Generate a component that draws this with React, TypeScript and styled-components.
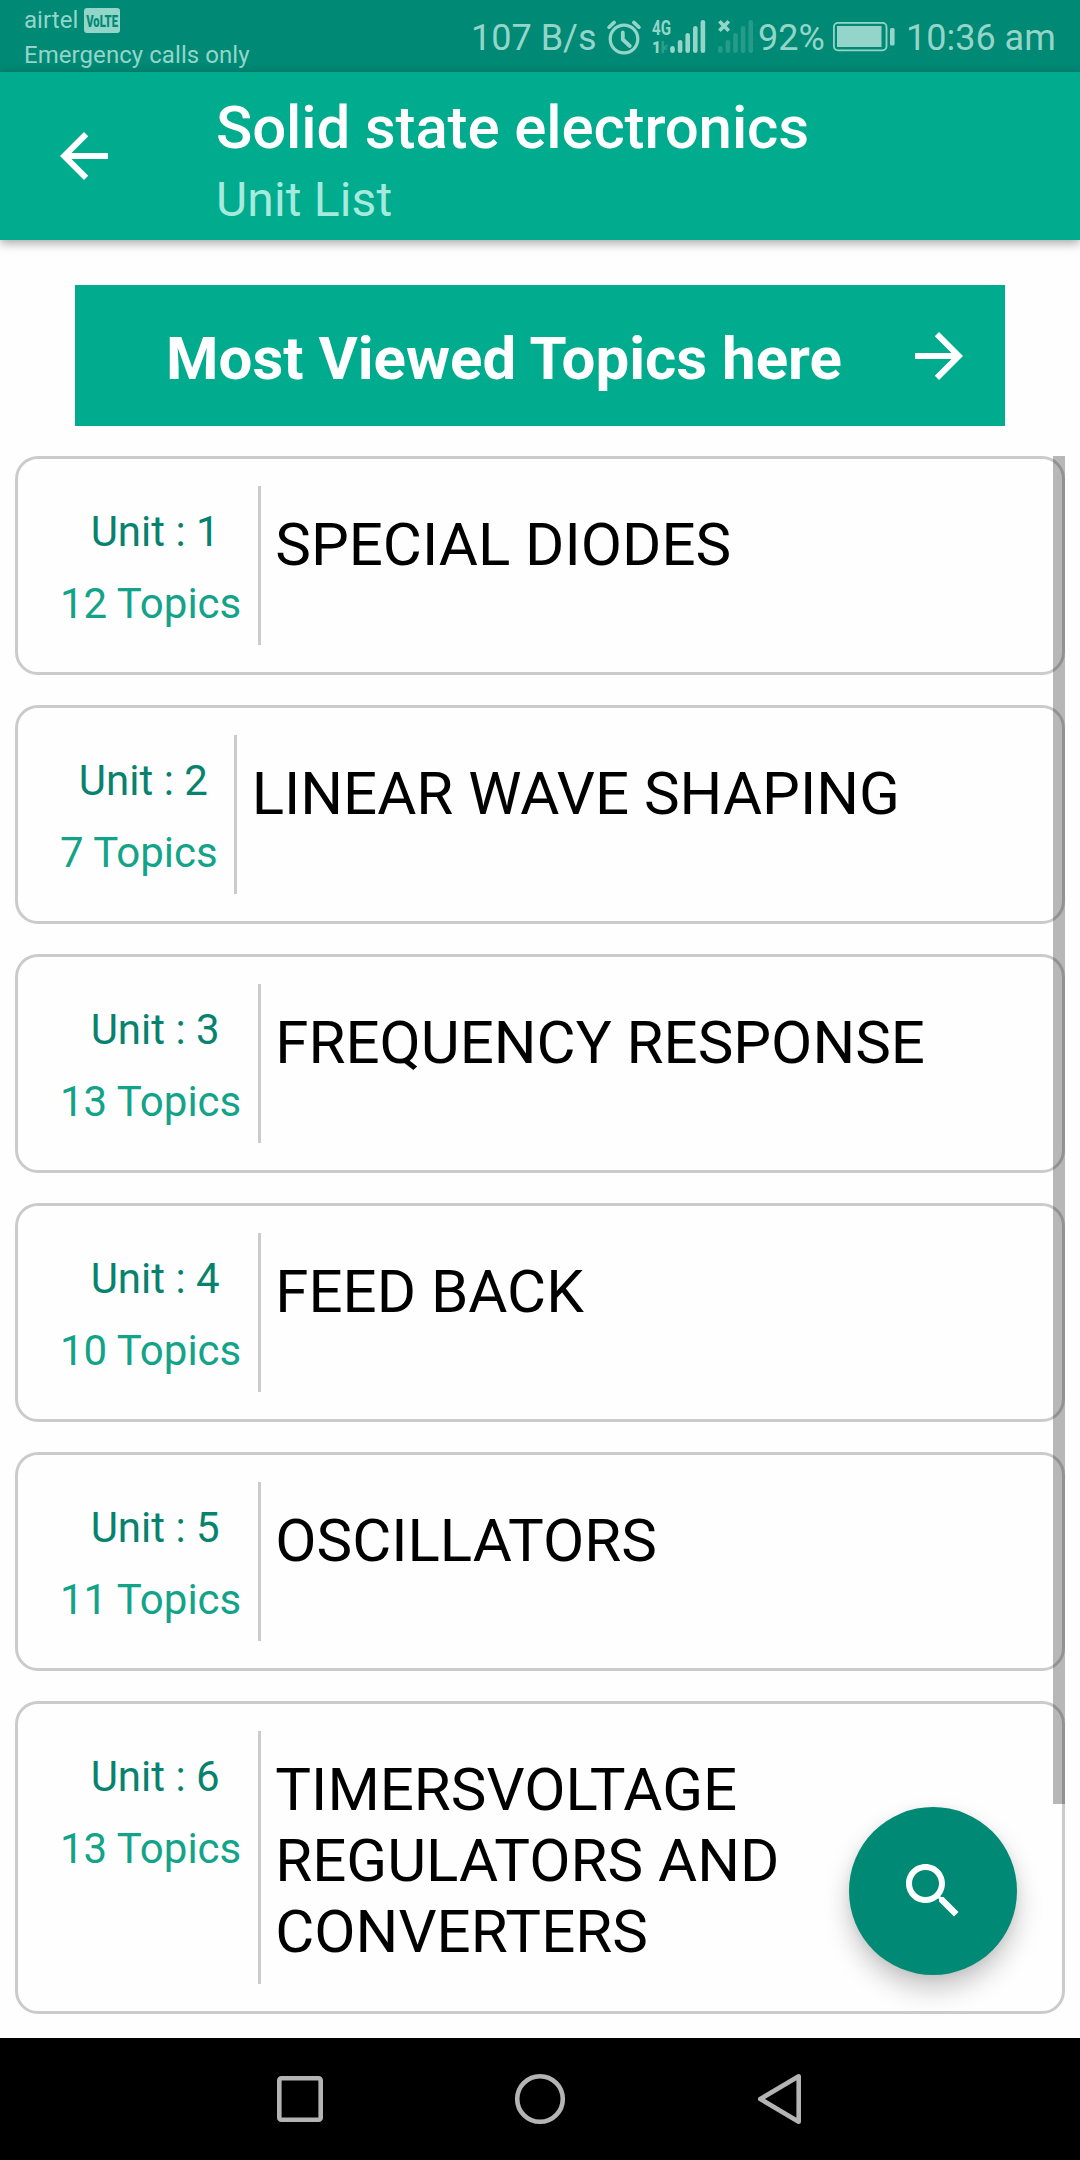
import React from 'react';
import styled, { createGlobalStyle } from 'styled-components';

const colors = {
  primary: '#00ab8e',
  primaryDark: '#008975',
  statusInk: '#94d5c9',
  line: '#cbcbcb',
};

const GlobalStyle = createGlobalStyle`
  * { box-sizing: border-box; }
  body { margin: 0; background: #fefefe; font-family: Roboto, "Noto Sans", sans-serif; }
  svg { display: block; flex: none; overflow: visible; }
`;

const Screen = styled.div`
  width: 1080px;
  height: 2160px;
  display: flex;
  flex-direction: column;
  overflow: hidden;
  background: #fefefe;
`;

const StatusBar = styled.header`
  height: 72px;
  flex: none;
  display: flex;
  justify-content: space-between;
  padding: 0 24px;
  background: ${colors.primaryDark};
  color: ${colors.statusInk};
`;

const Carrier = styled.div`
  display: flex;
  flex-direction: column;
  padding-top: 3px;
  font-size: 24px;
  letter-spacing: 0.06px;
  line-height: 35px;
  white-space: nowrap;
`;

const CarrierRow = styled.div`
  display: flex;
  height: 35px;
  align-items: center;
  gap: 6px;
`;

const VolteBadge = styled.span`
  width: 36px;
  height: 25px;
  display: flex;
  align-items: center;
  justify-content: center;
  border-radius: 3px;
  background: ${colors.statusInk};
  color: ${colors.primaryDark};
  font-size: 17px;
  font-weight: 900;
  line-height: 24px;

  span { flex: none; transform: scaleX(0.66); letter-spacing: 0; }
`;

const StatusIcons = styled.div`
  height: 74px;
  display: flex;
  align-items: center;
  font-size: 36px;
  line-height: 42px;
  white-space: nowrap;
`;

const StatusText = styled.span<{ $width: number }>`
  width: ${(p) => p.$width}px;
  padding-top: 1px;
`;

const Spacer = styled.span<{ $width: number }>`
  width: ${(p) => p.$width}px;
`;

const AppBar = styled.div`
  height: 168px;
  flex: none;
  display: flex;
  background: ${colors.primary};
  box-shadow: 0 3px 10px rgba(0, 0, 0, 0.36);
  color: #fff;
`;

const BackButton = styled.button`
  width: 216px;
  padding: 0 0 0 48px;
  border: 0;
  background: none;
  color: inherit;
`;

const Titles = styled.div`
  display: flex;
  flex-direction: column;
  padding-top: 21px;
`;

const Title = styled.h1`
  margin: 0;
  font-size: 60px;
  font-weight: 500;
  letter-spacing: -0.14px;
  line-height: 70px;
`;

const Subtitle = styled.div`
  margin-top: 9px;
  font-size: 48px;
  letter-spacing: 0.15px;
  line-height: 56px;
  color: #a5eadd;
`;

const Banner = styled.button`
  width: 930px;
  height: 141px;
  flex: none;
  margin: 45px 75px 30px;
  padding: 6px 30px 0 91px;
  display: flex;
  justify-content: space-between;
  align-items: center;
  border: 0;
  background: ${colors.primary};
  color: #fff;
  font: 700 60px/70px Roboto, sans-serif;
  svg { margin-top: -6px; }
`;

const UnitArea = styled.main`
  position: relative;
  flex: 1;
  min-height: 0;
  padding: 0 15px;
`;

const UnitList = styled.div`
  display: flex;
  flex-direction: column;
  gap: 30px;
`;

const Card = styled.article`
  min-height: 219px;
  display: flex;
  padding: 27px 42px;
  border: 3px solid ${colors.line};
  border-radius: 23px;
`;

const Meta = styled.div`
  display: flex;
  flex-direction: column;
  align-items: center;
  padding: 21px 16.5px 0 0;
  border-right: 3px solid ${colors.line};
  font-size: 42px;
  line-height: 50px;
  white-space: nowrap;
`;

const UnitNumber = styled.div`
  padding-left: 9px;
  color: #07826f;
`;

const TopicCount = styled.div`
  margin-top: 22px;
  color: #12a388;
`;

const UnitName = styled.h2`
  flex: 1;
  margin: 0;
  padding: 23px 0 17px 14.5px;
  font-size: 60px;
  font-weight: 400;
  line-height: 71px;
  color: #000;
`;

const ScrollThumb = styled.div`
  position: absolute;
  top: 0;
  right: 15px;
  width: 12px;
  height: 1348px;
  background: rgba(0, 0, 0, 0.28);
`;

const SearchButton = styled.button`
  position: absolute;
  right: 63px;
  bottom: 63px;
  width: 168px;
  height: 168px;
  padding: 0;
  display: flex;
  align-items: center;
  justify-content: center;
  border: 0;
  border-radius: 50%;
  background: ${colors.primaryDark};
  color: #fff;
  box-shadow: 0 14px 26px rgba(0, 0, 0, 0.22), 0 2px 10px rgba(0, 0, 0, 0.06);
`;

const NavBar = styled.nav`
  height: 122px;
  flex: none;
  display: flex;
  justify-content: center;
  align-items: center;
  gap: 180px;
  background: #000;
`;

const MaterialIcon = ({ d }: { d: string }) => (
  <svg width="72" height="72" viewBox="0 0 24 24" fill="currentColor"><path d={d} /></svg>
);

const BACK = 'M20 11H7.83l5.59-5.59L12 4l-8 8 8 8 1.41-1.41L7.83 13H20v-2z';
const FORWARD = 'M12 4l-1.41 1.41L16.17 11H4v2h12.17l-5.58 5.59L12 20l8-8z';
const SEARCH =
  'M15.5 14h-.79l-.28-.27C15.41 12.59 16 11.11 16 9.5 16 5.91 13.09 3 9.5 3S3 5.91 3 9.5 5.91 16 9.5 16c1.61 0 3.09-.59 4.23-1.57l.27.28v.79l5 4.99L20.49 19l-4.99-5zm-6 0C7.01 14 5 11.99 5 9.5S7.01 5 9.5 5 14 7.01 14 9.5 11.99 14 9.5 14z';

const AlarmIcon = () => (
  <svg width="34" height="36" viewBox="0 0 34 36" fill="none" stroke={colors.statusInk} strokeWidth="3.2" strokeLinecap="round">
    <circle cx="17" cy="20" r="13.8" />
    <path d="M15.8 13.5V20.5l7 6.5" strokeWidth="3.8" strokeLinejoin="round" />
    <path d="M2 8.2L7.2 3.4M26.8 3.4L32 8.2" strokeWidth="3.6" />
  </svg>
);

const BARS = [7, 13, 20, 27, 33];

const SignalBars = ({ x, opacity = 1 }: { x: number; opacity?: number }) => (
  <g fill={colors.statusInk} opacity={opacity}>
    {BARS.map((h, i) => (
      <rect key={h} x={x + i * 7.6} y={34 - h} width="4.6" height={h} rx="2.3" />
    ))}
  </g>
);

const PrimarySignal = () => (
  <svg width="54" height="36" viewBox="0 0 54 36" fill={colors.statusInk} fontFamily="Roboto" fontWeight="700">
    <text x="0" y="15.6" fontSize="20" textLength="19" lengthAdjust="spacingAndGlyphs">4G</text>
    <text x="0" y="34" fontSize="16" fontWeight="900" textLength="9" lengthAdjust="spacingAndGlyphs">1</text>
    <path d="M9.5 22h2.6v5l4-2-2 4 1.6 2-3.6-.5V34H9.500z" opacity="0.28" />
    <SignalBars x={18.2} />
  </svg>
);

const EmptySignal = () => (
  <svg width="36" height="36" viewBox="0 0 36 36">
    <SignalBars x={0} opacity={0.25} />
    <path d="M1.4 2.2l9.4 9.6M10.8 2.2L1.4 11.8" stroke={colors.statusInk} strokeWidth="3.6" />
  </svg>
);

const BatteryIcon = () => (
  <svg width="62" height="30" viewBox="0 0 62 30" fill={colors.statusInk}>
    <rect x="0.9" y="0.9" width="52.6" height="27.4" rx="4" fill="none" stroke={colors.statusInk} strokeWidth="1.8" />
    <rect x="4" y="4" width="44.5" height="21" />
    <rect x="57" y="6" width="4.6" height="17.5" rx="1.5" />
  </svg>
);

const NavIcon = ({ children }: { children: React.ReactNode }) => (
  <svg width="60" height="60" viewBox="0 0 60 60" fill="none" stroke="#b4b4b4" strokeWidth="4.6" strokeLinejoin="round">
    {children}
  </svg>
);

const units = [
  { topics: 12, name: 'SPECIAL DIODES' },
  { topics: 7, name: 'LINEAR WAVE SHAPING' },
  { topics: 13, name: 'FREQUENCY RESPONSE' },
  { topics: 10, name: 'FEED BACK' },
  { topics: 11, name: 'OSCILLATORS' },
  { topics: 13, name: 'TIMERSVOLTAGE REGULATORS AND CONVERTERS' },
];

export default function App() {
  return (
    <Screen>
      <GlobalStyle />
      <StatusBar>
        <Carrier>
          <CarrierRow>airtel <VolteBadge><span>VoLTE</span></VolteBadge></CarrierRow>
          <div>Emergency calls only</div>
        </Carrier>
        <StatusIcons>
          <StatusText $width={136}>107 B/s</StatusText>
          <AlarmIcon />
          <Spacer $width={11} />
          <PrimarySignal />
          <Spacer $width={12} />
          <EmptySignal />
          <Spacer $width={4} />
          <StatusText $width={75}>92%</StatusText>
          <BatteryIcon />
          <Spacer $width={11} />
          <StatusText $width={150}>10:36 am</StatusText>
        </StatusIcons>
      </StatusBar>
      <AppBar>
        <BackButton aria-label="Back"><MaterialIcon d={BACK} /></BackButton>
        <Titles>
          <Title>Solid state electronics</Title>
          <Subtitle>Unit List</Subtitle>
        </Titles>
      </AppBar>
      <Banner>
        Most Viewed Topics here
        <MaterialIcon d={FORWARD} />
      </Banner>
      <UnitArea>
        <UnitList>
          {units.map((unit, i) => (
            <Card key={unit.name}>
              <Meta>
                <UnitNumber>Unit : {i + 1}</UnitNumber>
                <TopicCount>{unit.topics} Topics</TopicCount>
              </Meta>
              <UnitName>{unit.name}</UnitName>
            </Card>
          ))}
        </UnitList>
        <ScrollThumb />
        <SearchButton aria-label="Search"><MaterialIcon d={SEARCH} /></SearchButton>
      </UnitArea>
      <NavBar>
        <NavIcon><rect x="9.3" y="9.3" width="41.4" height="41.4" rx="2" /></NavIcon>
        <NavIcon><circle cx="30" cy="30" r="22.8" /></NavIcon>
        <NavIcon><path d="M10.3 30L48.7 7.3V52.7Z" /></NavIcon>
      </NavBar>
    </Screen>
  );
}
